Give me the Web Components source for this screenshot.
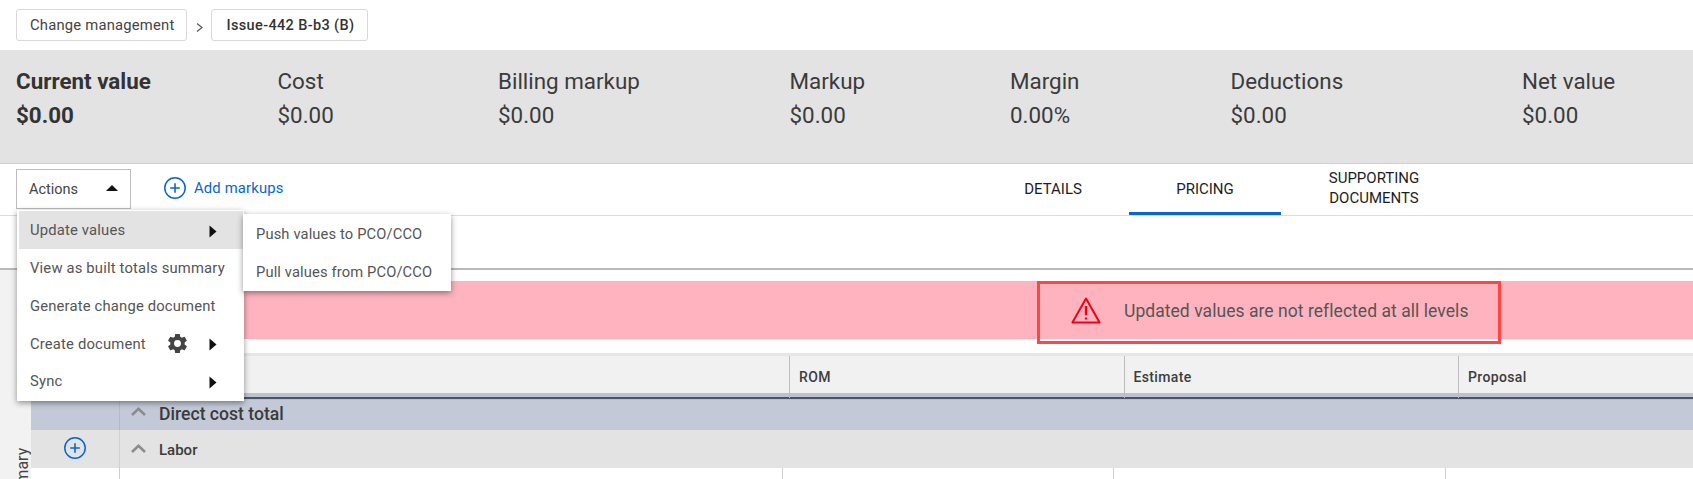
<!DOCTYPE html>
<html lang="en"><head><meta charset="utf-8"><title>Pricing</title>
<style>
html,body{margin:0;padding:0;background:#fff}
body{font-family:Roboto,"Liberation Sans",sans-serif;color:#333;width:1693px;height:479px;overflow:hidden}
</style></head><body>
<pricing-page></pricing-page>
<script>
const def=(name,css,html)=>{customElements.define(name,class extends HTMLElement{
  constructor(){super();this.attachShadow({mode:'open'}).innerHTML=`<style>${css}</style>${html}`;}
});};
const plus=`<svg width="22" height="22" viewBox="0 0 22 22" fill="none" stroke="#0a66cc"><circle cx="11" cy="11" r="10.2" stroke-width="1.5"/><path d="M11 6.2v9.6M6.2 11h9.6" stroke-width="1.6"/></svg>`;
const chev=`<svg width="15" height="9" viewBox="0 0 15 9" fill="none" stroke="#8c8c8c" stroke-width="2.6"><path d="M1 8l6.5-6.2L14 8"/></svg>`;
const tri=`<svg width="8" height="13" viewBox="0 0 8 13" style="display:block;margin-top:2px"><path d="M0.5 0.5L7.5 6.5L0.5 12.5z" fill="#111"/></svg>`;

def('crumb-bar',`:host{display:flex;align-items:flex-start;height:50px;box-sizing:border-box;padding:9px 16px 0;background:#fff}
 .c{display:flex;align-items:center;height:32px;box-sizing:border-box;border:1px solid #d9d9d9;border-radius:3px;padding:0 12px 0 13px;font-size:14.8px;letter-spacing:.2px;color:#444}
 .b{font-weight:500;color:#333;padding:0 13px 0 14px;font-size:14.5px;letter-spacing:.36px}
 svg{margin:14px 8px 0 9px}`,
 `<div class="c">Change management</div><svg width="7" height="9" viewBox="0 0 7 9" fill="none" stroke="#555" stroke-width="1.2"><path d="M1 .5L6 4.5L1 8.5"/></svg><div class="c b">Issue-442 B-b3 (B)</div>`);

def('stat-cell',`:host{display:block;font-size:22.4px;line-height:34px;color:#3b3b3b}
 :host([strong]){font-weight:700;color:#333}`,`<div><slot name="label"></slot></div><div><slot name="value"></slot></div>`);

def('stats-bar',`:host{display:grid;grid-template-columns:261.5px 220.5px 291.5px 220.5px 220.5px 291.5px 1fr;height:114px;box-sizing:border-box;padding:14px 0 0 16px;background:#e3e3e3;border-bottom:1px solid #d0d0d0}`,`<slot></slot>`);

def('action-button',`:host{display:flex;align-items:center;justify-content:space-between;width:115px;height:40px;box-sizing:border-box;border:1px solid #bdbdbd;padding:0 12px 0 12px;font-size:14.5px;color:#444;background:#fff}
 i{width:0;height:0;border:6px solid transparent;border-top:0;border-bottom:6px solid #111;margin-bottom:2px}`,`<slot></slot><i></i>`);

def('add-link',`:host{display:flex;align-items:center;gap:8px;color:#0a66cc;font-size:14.8px;letter-spacing:.17px;margin-top:-3px}`,`${plus}<slot></slot>`);

def('tab-item',`:host{display:flex;align-items:center;justify-content:center;text-align:center;width:152px;height:51px;box-sizing:border-box;padding:2px 0 0;font-size:15px;line-height:20px;color:#1d1d1d;border-bottom:3px solid transparent}
 :host([active]){border-bottom-color:#0a66cc}
 :host([wide]){width:186px;padding:0 40px 1px}`,`<slot></slot>`);

def('tool-bar',`:host{display:flex;align-items:flex-start;height:52px;box-sizing:border-box;padding:0 226px 0 16px;border-bottom:1px solid #dcdcdc;background:#fff}
 .l{display:flex;align-items:center;gap:33px;padding-top:5px}
 .t{display:flex;margin-left:auto}`,`<div class="l"><slot name="left"></slot></div><div class="t"><slot name="tabs"></slot></div>`);

def('alert-box',`:host{display:flex;align-items:center;box-sizing:border-box;width:464px;height:63px;flex:none;border:3px solid #ff4646;padding:0 0 3px 31px;gap:23px;font-size:17.5px;color:#555;letter-spacing:.05px}
 svg{flex:none;margin-bottom:1px}`,`<svg width="30" height="27" viewBox="0 0 30 27" fill="none" stroke="#f40012" stroke-width="2" stroke-linejoin="round"><path d="M15 1.6L1.4 25.4H28.6Z"/><path d="M15 9v9.2M15 20.4v2.2" stroke-width="2.4"/></svg><span><slot></slot></span>`);

def('alert-band',`:host{display:flex;height:58px;margin-top:11px;padding-left:1006px;background:#ffb3bf}`,`<slot></slot>`);

def('grid-head',`:host{display:grid;grid-template-columns:758px 334.5px 334.5px 1fr;height:44px;box-sizing:border-box;margin-top:14px;border-top:3px solid #e6e6e6;background:#f1f1f1;border-bottom:4px solid #bcc2d0;font-size:14px;font-weight:500;letter-spacing:.35px;color:#3d3d3d}
 .h{display:flex;align-items:center;padding:0 0 1px 9px;border-left:1px solid #bdbdbd;margin-bottom:-4px;height:41px}
 .h:first-child{border-left:0}`,`<div class="h"></div><div class="h">ROM</div><div class="h">Estimate</div><div class="h">Proposal</div>`);

def('group-row',`:host{display:grid;grid-template-columns:89px 1fr;box-sizing:border-box;background:#e3e3e3;height:38px;font-size:15px;font-weight:500;color:#3b3b3b}
 :host([total]){background:#c3c9d7;height:33px;font-size:17.6px;border-top:2px solid #4d5366;box-shadow:inset 0 1px 0 #b6bdcc}
 .a{display:flex;align-items:center;justify-content:center;border-right:1px solid #d0d0d0;padding:0 1px 2px}
 :host([total]) .a{border-right-color:#b4bac8}
 .b{display:flex;align-items:center;gap:13px;padding:0 0 0 11px}
 span{margin-top:2px}
 :host([total]) span{margin-top:0;margin-bottom:2px}
 svg{margin-bottom:1px}
 :host([total]) svg{margin-bottom:6px}`,`<div class="a"><slot name="add"></slot></div><div class="b">${chev}<span><slot></slot></span></div>`);

def('grid-body',`:host{display:grid;grid-template-columns:89px 662.5px 331.5px 331.5px 1fr;height:11px}
 div{border-right:1px solid #cfcfcf}`,`<div></div><div></div><div></div><div></div>`);

def('side-rail',`:host{display:flex;justify-content:flex-end;width:31px;flex:none;box-sizing:border-box;padding-top:182px;background:#f2f2f2;overflow:hidden;font-size:16px;color:#444}
 span{writing-mode:vertical-rl;transform:rotate(180deg);height:64px;line-height:17px;white-space:nowrap}`,`<span><slot></slot></span>`);

def('menu-entry',`:host{display:flex;align-items:center;height:38px;box-sizing:border-box;padding:0 26px 0 11px;font-size:14.8px;letter-spacing:.17px;color:#555;white-space:nowrap}
 :host([hot]){background:#e3e3e3}
 :host([sub]){font-size:14.7px;letter-spacing:.14px;padding-left:13px}
 .s{flex:1}
 .e{display:flex;align-items:center}`,`<span class="s"><slot></slot></span><span class="e"><slot name="end"></slot></span>`);

def('fly-menu',`:host{display:block;position:absolute;background:#fff;box-shadow:0 2px 6px rgba(0,0,0,.42)}`,`<slot></slot>`);

def('pricing-page',`:host{display:block;position:relative;width:1693px;height:479px;overflow:hidden}
 .gap{height:52px;border-bottom:2px solid #b9b9b9}
 .main{display:flex;height:209px}
 .c{flex:1;min-width:0}
 .m1{left:17px;top:210px;width:227px;height:191px;padding:1px 1px 0 2px;box-sizing:border-box}
 .m1 menu-entry:nth-child(n+4){margin-top:-.4px}
 .m2{left:243px;top:214px;width:208px;height:77px;padding-top:1px;box-sizing:border-box}`,
`<crumb-bar></crumb-bar>
<stats-bar>
 <stat-cell strong><span slot="label">Current value</span><span slot="value">$0.00</span></stat-cell>
 <stat-cell><span slot="label">Cost</span><span slot="value">$0.00</span></stat-cell>
 <stat-cell><span slot="label">Billing markup</span><span slot="value">$0.00</span></stat-cell>
 <stat-cell><span slot="label">Markup</span><span slot="value">$0.00</span></stat-cell>
 <stat-cell><span slot="label">Margin</span><span slot="value">0.00%</span></stat-cell>
 <stat-cell><span slot="label">Deductions</span><span slot="value">$0.00</span></stat-cell>
 <stat-cell><span slot="label">Net value</span><span slot="value">$0.00</span></stat-cell>
</stats-bar>
<tool-bar>
 <action-button slot="left">Actions</action-button>
 <add-link slot="left">Add markups</add-link>
 <tab-item slot="tabs">DETAILS</tab-item>
 <tab-item slot="tabs" active>PRICING</tab-item>
 <tab-item slot="tabs" wide>SUPPORTING DOCUMENTS</tab-item>
</tool-bar>
<div class="gap"></div>
<div class="main">
 <side-rail>Summary</side-rail>
 <div class="c">
  <alert-band><alert-box>Updated values are not reflected at all levels</alert-box></alert-band>
  <grid-head></grid-head>
  <group-row total>Direct cost total</group-row>
  <group-row><span slot="add" style="display:flex;margin:0">${plus}</span>Labor</group-row>
  <grid-body></grid-body>
 </div>
</div>
<fly-menu class="m1">
 <menu-entry hot>Update values<span slot="end">${tri}</span></menu-entry>
 <menu-entry>View as built totals summary</menu-entry>
 <menu-entry>Generate change document</menu-entry>
 <menu-entry>Create document<span slot="end" style="display:flex;align-items:center;gap:20px"><svg width="23" height="23" viewBox="0 0 24 24"><path fill="#444" d="M19.4 13c.05-.3.1-.65.1-1s-.05-.7-.1-1l2.1-1.65c.2-.15.25-.42.12-.64l-2-3.46c-.12-.22-.39-.3-.61-.22l-2.49 1c-.52-.4-1.08-.73-1.69-.98l-.38-2.65A.49.49 0 0 0 14 2h-4c-.25 0-.46.18-.49.42l-.38 2.65c-.61.25-1.17.59-1.69.98l-2.49-1c-.23-.09-.49 0-.61.22l-2 3.46c-.13.22-.07.49.12.64L4.57 11c-.05.3-.07.65-.07 1s.02.7.07 1l-2.11 1.65c-.19.15-.24.42-.12.64l2 3.46c.12.22.39.3.61.22l2.49-1c.52.4 1.08.73 1.69.98l.38 2.65c.03.24.24.42.49.42h4c.25 0 .46-.18.49-.42l.38-2.65c.61-.25 1.17-.59 1.69-.98l2.49 1c.23.09.49 0 .61-.22l2-3.46c.12-.22.07-.49-.12-.64L19.4 13zM12 15.6a3.6 3.6 0 1 1 0-7.2 3.6 3.6 0 0 1 0 7.2z"/></svg>${tri}</span></menu-entry>
 <menu-entry>Sync<span slot="end">${tri}</span></menu-entry>
</fly-menu>
<fly-menu class="m2">
 <menu-entry sub>Push values to PCO/CCO</menu-entry>
 <menu-entry sub>Pull values from PCO/CCO</menu-entry>
</fly-menu>`);
</script>
</body></html>
